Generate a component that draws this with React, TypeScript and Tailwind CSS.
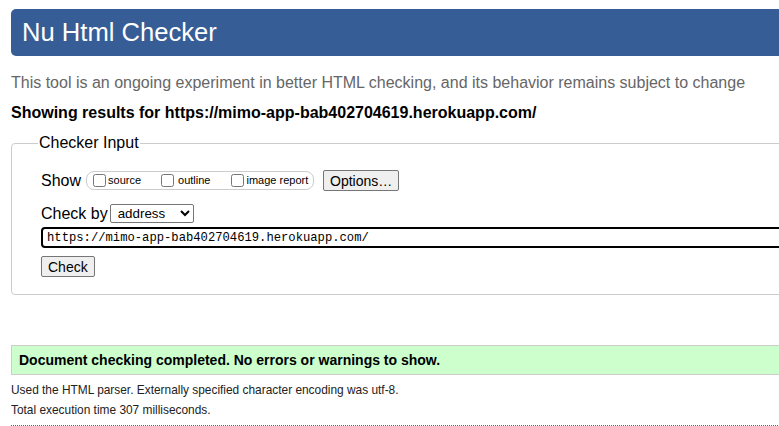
export default function App() {
  return (
    <div className="w-[779px] h-[426px] overflow-hidden bg-white font-['Liberation_Sans',Arial,sans-serif] text-black">
      <div className="w-[840px] pl-[11px]">
        <header className="mt-[9px] flex h-[47px] items-center rounded-[5px] bg-[#365d95] pl-[11px]">
          <h1 className="text-[25.6px] leading-none text-white">Nu Html Checker</h1>
        </header>

        <p className="mt-[18px] text-[16px] leading-[18px] text-[#666]">
          This tool is an ongoing experiment in better HTML checking, and its behavior remains subject to change
        </p>
        <p className="mt-[12px] text-[16px] font-bold leading-[18px]">
          Showing results for https://mimo-app-bab402704619.herokuapp.com/
        </p>

        <fieldset className="mt-[12px] rounded-[4px] border border-[#ccc] pb-[17px] pl-[29px]">
          <legend className="ml-[-3px] px-[1px] text-[16px] leading-[18px]">Checker Input</legend>

          <div className="mt-[18px] flex items-center">
            <span className="text-[16px] leading-[18px]">Show</span>
            <div className="ml-[5px] flex h-[19px] w-[228px] items-center whitespace-nowrap rounded-[8px] border border-[#ccc] pl-[6px] text-[11px]">
              <label className="flex items-center">
                <input type="checkbox" className="m-0 h-[13px] w-[13px]" />
                <span className="ml-[2px]">source</span>
              </label>
              <label className="ml-[20px] flex items-center">
                <input type="checkbox" className="m-0 h-[13px] w-[13px]" />
                <span className="ml-[4px]">outline</span>
              </label>
              <label className="ml-[21px] flex items-center">
                <input type="checkbox" className="m-0 h-[13px] w-[13px]" />
                <span className="ml-[2px]">image report</span>
              </label>
            </div>
            <button className="ml-[9px] h-[21px] rounded-[2px] border border-[#767676] bg-[#efefef] px-[6px] text-[14px] leading-[16px]">
              Options…
            </button>
          </div>

          <div className="mt-[13px] flex items-center">
            <span className="text-[16px] leading-[18px]">Check by</span>
            <select className="ml-[2px] h-[19px] w-[84px] rounded-[2px] border border-[#767676] bg-white pl-[3px] text-[13.33px] leading-none">
              <option>address</option>
            </select>
          </div>

          <input
            type="text"
            readOnly
            value="https://mimo-app-bab402704619.herokuapp.com/"
            className="mt-[4px] block h-[21px] w-full rounded-[4px] border-2 border-black pl-[4px] font-['Liberation_Mono',monospace] text-[12.2px] outline-none"
          />

          <button className="mt-[8px] block h-[21px] rounded-[2px] border border-[#767676] bg-[#efefef] px-[6px] text-[14px] leading-[16px]">
            Check
          </button>
        </fieldset>

        <div className="mt-[50px] flex h-[30px] items-center border border-[#ccc] bg-[#ccffcc] pl-[7px]">
          <p className="text-[14px] font-bold">Document checking completed. No errors or warnings to show.</p>
        </div>

        <p className="mt-[8px] text-[11.9px] leading-[14px] text-[#222]">
          Used the HTML parser. Externally specified character encoding was utf-8.
        </p>
        <p className="mt-[6px] text-[11.9px] leading-[14px] text-[#222]">Total execution time 307 milliseconds.</p>
        <div className="mt-[8px] border-t border-dotted border-[#666]" />
      </div>
    </div>
  );
}
